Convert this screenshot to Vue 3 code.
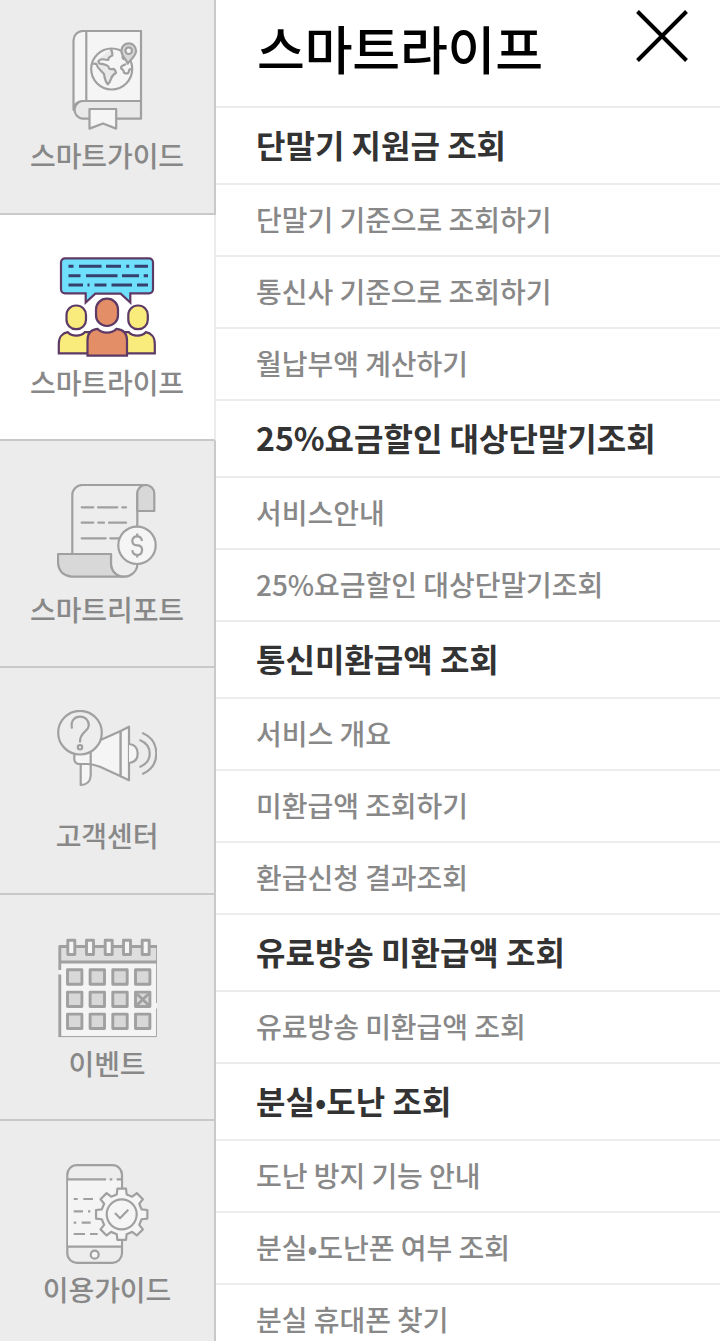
<script setup>
import { ref, computed } from 'vue'

const tabs = [
  { id: 'guide', label: '스마트가이드' },
  { id: 'life', label: '스마트라이프' },
  { id: 'report', label: '스마트리포트' },
  { id: 'center', label: '고객센터' },
  { id: 'event', label: '이벤트' },
  { id: 'use', label: '이용가이드' }
]

const active = ref('life')

const sections = [
  {
    title: '단말기 지원금 조회',
    items: ['단말기 기준으로 조회하기', '통신사 기준으로 조회하기', '월납부액 계산하기']
  },
  {
    title: '25%요금할인 대상단말기조회',
    items: ['서비스안내', '25%요금할인 대상단말기조회']
  },
  {
    title: '통신미환급액 조회',
    items: ['서비스 개요', '미환급액 조회하기', '환급신청 결과조회']
  },
  {
    title: '유료방송 미환급액 조회',
    items: ['유료방송 미환급액 조회']
  },
  {
    title: '분실•도난 조회',
    items: ['도난 방지 기능 안내', '분실•도난폰 여부 조회', '분실 휴대폰 찾기']
  }
]

const activeLabel = computed(() => tabs.find((t) => t.id === active.value).label)

// calendar icon
const rings = [14.3, 33, 51.7, 70, 88.7]
const cols = [17.7, 40.3, 63, 85.7]
const rows = [39, 61.3, 83.3]

// gear icon, 8 teeth
const gear = []
for (let i = 0; i < 8; i++) {
  const steps = [[-14, 20.5], [-9.5, 26], [9.5, 26], [14, 20.5]]
  steps.forEach(([deg, r]) => {
    const a = ((i * 45 + deg) * Math.PI) / 180
    gear.push(`${(64.7 + r * Math.cos(a)).toFixed(2)},${(50.3 + r * Math.sin(a)).toFixed(2)}`)
  })
}
const gearPoints = gear.join(' ')
</script>

<template>
  <div class="menu">
    <ul class="tabs">
      <li
        v-for="tab in tabs"
        :key="tab.id"
        class="tab"
        :class="[tab.id, { active: tab.id === active }]"
        @click="active = tab.id"
      >
        <svg v-if="tab.id === 'guide'" class="icon" viewBox="0 0 100 100">
          <path class="light" d="M29.700 1H26a9.500 9.500 0 0 0-9.500 9.700V79.800A8.900 8.900 0 0 1 25.500 71H84V1z" />
          <path class="mid" d="M84 71H25.500a8.900 8.900 0 0 0 0 17.700H84z" />
          <path d="M29.300 1v70" />
          <path class="light" d="M32.500 79h26.700v19.600L46 93.500l-13.500 5.100z" />
          <circle class="light" cx="54.700" cy="39" r="20.500" />
          <path class="mid" d="M35.700 34q3-.8 4 .7 1 3.300 3.300 5l4 4.300q1 7 3.700 10.300 2-1.500 3.300-5.500 1-3.500 5-6-.5-3-2.500-4-2.500.5-4.200 0-.3-2.600-2.700-3.600-3.600-1.300-6.600-1.500-2-1-1.300-2.700 1.500-2 4.600-1.700 3 .8 5 .7-.5-2.500 4-4.500.5-2-1.300-6.500" />
          <path d="M66 26q-1.500 2 1.500 3.500M69 34l-4 2q-1.500 1.500-.5 2.800 2 .7 2.500 3.900 2.500 1.300 4.300.3l1.200-3.700 2.700-.3" />
          <path class="dim" d="M70.700 33.500C69 29 64.400 26 64.400 20.700a7.300 7.300 0 0 1 14.600 0C79 26 74 29 70.700 33.500z" />
          <circle class="light" cx="71.700" cy="20.700" r="3.300" />
        </svg>

        <svg v-else-if="tab.id === 'life'" class="icon color" viewBox="0 0 100 100">
          <path class="blue" d="M8 1.300h84a4 4 0 0 1 4 4v27a4 4 0 0 1-4 4H73.300V45.500l-9.600-8.800H38.300L28.700 45.500V36.300H8a4 4 0 0 1-4-4v-27a4 4 0 0 1 4-4z" />
          <path class="words" d="M11.500 9.300h5M22 9.300h22.500M49 9.300h15M69.200 9.300h3M77.500 9.300h13.500M11.500 18.700h12M29 18.700h31.500M65 18.700h17M86.700 18.700h4.300M11.500 28h14.500M30.500 28h2M37.500 28h12M54.500 28h20.500M80 28h11" />
          <rect class="yellow" x="9.500" y="48.500" width="19.500" height="23.700" rx="9.500" />
          <rect class="yellow" x="71.300" y="48.500" width="19.500" height="23.700" rx="9.500" />
          <path class="yellow" d="M1.800 96.300V87c0-7 4-11 9-11.800 4 4.500 13 4.500 17 0H34v21.100z" />
          <path class="yellow" d="M97.800 96.300V87c0-7-4-11-9-11.800-4 4.500-13 4.500-17 0H66v21.100z" />
          <rect class="orange" x="39" y="41.700" width="22" height="27.300" rx="10.800" />
          <path class="orange" d="M30.500 98.700V83c0-6.500 3.500-10.500 10-11.200 4 5 15 5 19 0 6.500.7 10.500 4.700 10.500 11.200v15.700z" />
        </svg>

        <svg v-else-if="tab.id === 'report'" class="icon" viewBox="0 0 100 100">
          <path class="pale" d="M15.300 70V11a10 10 0 0 1 10-10H89a8.700 9 0 0 0-8.700 9v71a13.500 12.500 0 0 1-13.600 11.700A12.700 12.700 0 0 1 54 80V70z" />
          <path class="dim" d="M80.300 27V9.500a8.500 8.500 0 0 1 17 0V27z" />
          <path class="dim" d="M1 70h53v10a12.700 12.700 0 0 0 12.700 12.700H14.500Q2 91 1 79z" />
          <path d="M24.700 23.300h11.600M41 23.300h19.300M65.300 23.300H69M24.700 38.700h11.600M41.300 38.700H47M52 38.700h17M24.700 54.300h24M53.300 54.300H62" stroke-linecap="round" />
          <circle class="light" cx="80" cy="61.300" r="18.700" />
          <path d="M85 57q-.5-4.700-4.800-4.700t-4.900 4.400q0 4.600 4.900 4.600t4.900 4.800q-.4 4.900-4.900 4.900t-4.900-4.800M80.200 49.500v2.800M80.200 71v2.600" />
        </svg>

        <svg v-else-if="tab.id === 'center'" class="icon" viewBox="0 0 100 100">
          <path class="light" d="M23.700 53.700V75q9 0 10-9V53z" />
          <path class="light" d="M17.300 44v5.500q.5 4.500 5.500 4.500h8q5 .3 12.200 2.700l20.700 9.600V21L43 30.300z" />
          <path d="M33.700 41v13" />
          <path class="light" d="M63.700 21 72 16.700v53.600l-8.300-4z" />
          <path class="light" d="M72 34q8.700 1 8.700 9.500T72 53" />
          <path d="M83.300 30.300q9.400 4 9.400 13.200t-9.400 13.200M86 23.300q13.300 6 13.300 20.200T86 63.700" stroke-linecap="round" />
          <circle class="pale" cx="23" cy="22.700" r="21.800" />
          <path d="M14.900 17.700C13.500 11 17.500 6.700 23 6.700s9 4 8.800 8.800C31.500 22 23 21 23 31.700" stroke-linecap="round" />
          <circle cx="23" cy="37.300" r="2.200" />
        </svg>

        <svg v-else-if="tab.id === 'event'" class="icon" viewBox="0 0 100 100">
          <path class="fill-light" d="M2.500 8h97.200v90.500H2.500z" />
          <path class="fill-dim" d="M3 8h96.700v16H3z" />
          <path d="M2.800 32V8.500H100M2.800 24H100M2.800 36.500V99" />
          <path class="thin" d="M2 98.600h97.600V70.500M99.600 65V8" />
          <rect v-for="x in rings" :key="x" class="light" :x="x - 3.500" y="2.200" width="7" height="14.300" />
          <template v-for="(y, r) in rows" :key="y">
            <rect
              v-for="x in cols"
              :key="x"
              class="dim"
              :x="x - 7.200"
              :y="y - 7.200"
              width="14.400"
              height="14.400"
            />
            <path v-if="r === 1" d="m80 56 11.500 11M91.500 56 80 67" />
          </template>
        </svg>

        <svg v-else class="icon" viewBox="0 0 100 100">
          <rect class="pale" x="10.300" y="1.200" width="54.700" height="97.600" rx="9.500" />
          <path class="fill-light" d="M11 16h53v66H11z" />
          <path d="M10.300 15.300H49M52.700 15.300h2.600M59.700 15.300H65M10.300 82.700H65M16.700 35h4M26.300 35H36M16.700 47.300H26M31 47.300h2.300M16.700 58.700h2.600M24.700 58.700h9M16.700 70H28M33 70h7.700" />
          <circle class="light" cx="37.700" cy="90.700" r="4" />
          <polygon class="light" :points="gearPoints" />
          <circle class="light" cx="64.700" cy="50.300" r="15" />
          <path d="m58 49 5 5.200 8.300-8.400" />
        </svg>

        <span class="tab-label">{{ tab.label }}</span>
      </li>
    </ul>

    <div class="panel">
      <header class="head">
        <h1>{{ activeLabel }}</h1>
        <button type="button" class="close" aria-label="닫기">
          <svg viewBox="0 0 52 52">
            <path d="M1.500 1.500l49 49M50.500 1.500l-49 49" />
          </svg>
        </button>
      </header>

      <section v-for="section in sections" :key="section.title">
        <h2>
          <template v-for="(part, i) in section.title.split('•')" :key="i"><span v-if="i" class="dot">•</span>{{ part }}</template>
        </h2>
        <ul>
          <li v-for="item in section.items" :key="item">{{ item }}</li>
        </ul>
      </section>
    </div>
  </div>
</template>

<style>
body {
  margin: 0;
  background: #fff;
}
</style>

<style scoped>
.menu {
  display: flex;
  height: 1341px;
  overflow: hidden;
  font-family: 'Noto Sans CJK KR', 'Noto Sans', sans-serif;
}
ul {
  list-style: none;
  margin: 0;
  padding: 0;
}

.tabs {
  width: 216px;
  flex-shrink: 0;
}
.tab {
  box-sizing: border-box;
  height: 227px;
  padding-top: 43px;
  display: flex;
  flex-direction: column;
  align-items: center;
  background: #ececec;
  border-right: 2px solid #c9c9c9;
  border-bottom: 2px solid #c9c9c9;
  cursor: pointer;
}
.tab.guide {
  height: 215px;
  padding-top: 30px;
}
.tab.life {
  height: 226px;
  padding-top: 42px;
}
.tab.event {
  height: 226px;
}
.tab.center {
  padding-top: 42px;
}
.tab.active {
  background: #fff;
  border-right-color: #ececec;
}
.tab-label {
  margin-top: 5px;
  font-size: 28px;
  font-weight: 500;
  line-height: 40px;
  letter-spacing: -0.1px;
  color: #888;
  white-space: nowrap;
}

.icon {
  display: block;
  width: 100px;
  height: 100px;
  flex-shrink: 0;
  fill: none;
  stroke: #a0a0a0;
  stroke-width: 2.2;
  stroke-linejoin: round;
}
.tab.event .icon {
  stroke-width: 2.9;
}
.light {
  fill: #f5f5f5;
}
.pale {
  fill: #ededed;
}
.mid {
  fill: #e9e9e9;
}
.dim {
  fill: #d8d8d8;
}
.fill-light {
  fill: #f4f4f4;
  stroke: none;
}
.fill-dim {
  fill: #dedede;
  stroke: none;
}
.thin {
  stroke-width: 1;
}
.icon.color {
  stroke: #5d3a66;
  stroke-linejoin: miter;
}
.blue {
  fill: #6fe0fb;
}
.yellow {
  fill: #f9eb7c;
}
.orange {
  fill: #e38e66;
}
.words {
  stroke: #35406f;
  stroke-width: 3;
}

.panel {
  flex: 1;
  min-width: 0;
}
.head {
  box-sizing: border-box;
  height: 108px;
  padding: 10px 32px 0 41px;
  display: flex;
  justify-content: space-between;
  align-items: flex-start;
  border-bottom: 2px solid #ececec;
}
h1 {
  margin: 0;
  font-size: 52px;
  font-weight: 500;
  line-height: 76px;
  letter-spacing: -0.2px;
  color: #000;
}
.close {
  width: 52px;
  height: 52px;
  padding: 0;
  border: none;
  background: none;
  cursor: pointer;
}
.close svg {
  display: block;
  width: 52px;
  height: 52px;
  stroke: #000;
  stroke-width: 4;
}
h2,
.panel li {
  box-sizing: border-box;
  margin: 0;
  padding-left: 40px;
  border-bottom: 2px solid #ececec;
  white-space: nowrap;
}
h2 {
  height: 77px;
  font-size: 32px;
  font-weight: 700;
  line-height: 73px;
  color: #333;
}
.dot {
  font-weight: 500;
}
.panel li {
  height: 72px;
  font-size: 28px;
  font-weight: 500;
  line-height: 68px;
  letter-spacing: -0.04px;
  color: #888;
}
</style>
